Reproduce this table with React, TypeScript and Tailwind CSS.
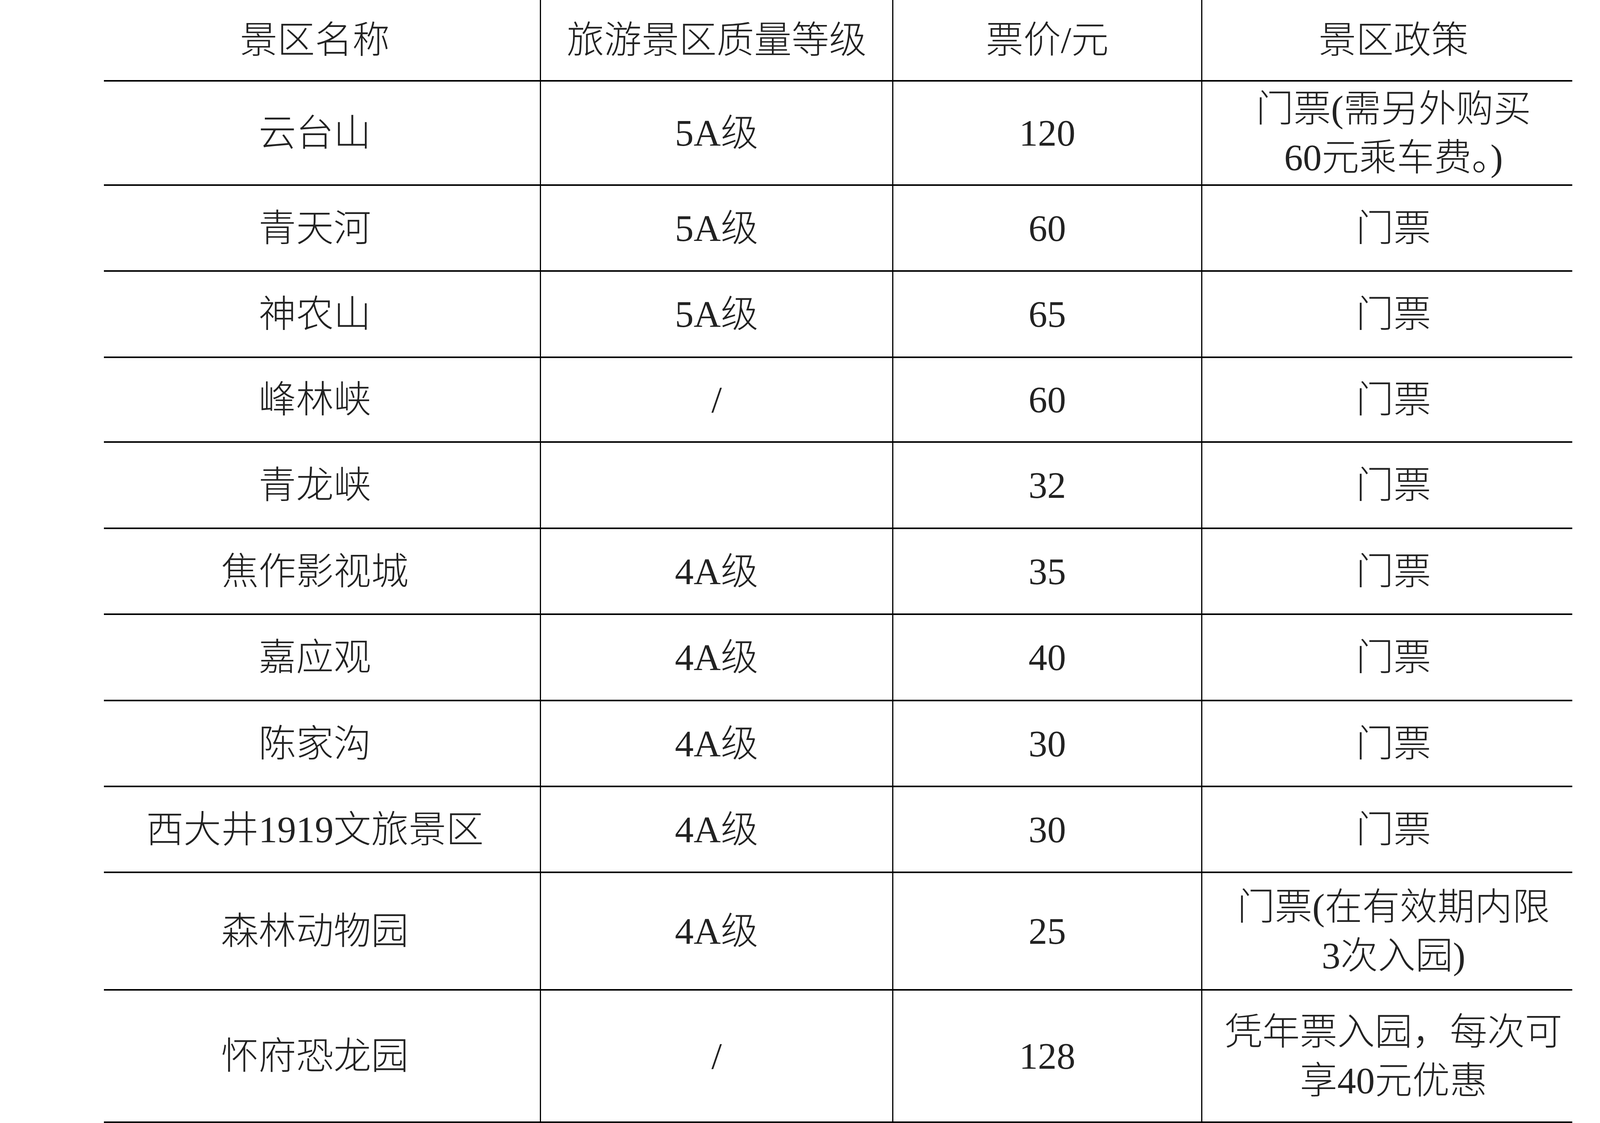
const rows: { name: string; level: string; price: string; policy: string[]; h: string }[] = [
  { name: '云台山', level: '5A级', price: '120', policy: ['门票(需另外购买', '60元乘车费。)'], h: 'h-[267px]' },
  { name: '青天河', level: '5A级', price: '60', policy: ['门票'], h: 'h-[220px]' },
  { name: '神农山', level: '5A级', price: '65', policy: ['门票'], h: 'h-[221px]' },
  { name: '峰林峡', level: '/', price: '60', policy: ['门票'], h: 'h-[217px]' },
  { name: '青龙峡', level: '', price: '32', policy: ['门票'], h: 'h-[221px]' },
  { name: '焦作影视城', level: '4A级', price: '35', policy: ['门票'], h: 'h-[220px]' },
  { name: '嘉应观', level: '4A级', price: '40', policy: ['门票'], h: 'h-[221px]' },
  { name: '陈家沟', level: '4A级', price: '30', policy: ['门票'], h: 'h-[220px]' },
  { name: '西大井1919文旅景区', level: '4A级', price: '30', policy: ['门票'], h: 'h-[220px]' },
  { name: '森林动物园', level: '4A级', price: '25', policy: ['门票(在有效期内限', '3次入园)'], h: 'h-[301px]' },
  { name: '怀府恐龙园', level: '/', price: '128', policy: ['凭年票入园，每次可', '享40元优惠'], h: 'h-[339px]' },
]

function Row({ cells, h }: { cells: React.ReactNode[]; h: string }) {
  return (
    <div className={`grid grid-cols-[1116px_902px_791px_950px] ${h}`}>
      <div className="flex items-center justify-center border-b-4 border-black pr-[36px] text-center">{cells[0]}</div>
      <div className="flex items-center justify-center border-b-4 border-l-[3px] border-black text-center">{cells[1]}</div>
      <div className="flex items-center justify-center border-b-4 border-l-[3px] border-black text-center">{cells[2]}</div>
      <div className="flex items-center justify-center border-b-4 border-l-[3px] border-black pl-[32px] text-center">{cells[3]}</div>
    </div>
  )
}

export default function App() {
  return (
    <div
      className="w-[4320px] h-[2876px] bg-white pl-[266px] text-[96px] leading-[125px] font-light text-[#222] overflow-hidden"
      style={{ fontFamily: '"Liberation Serif", "Noto Sans CJK SC", serif' }}
    >
      <div className="w-[3759px]">
        <Row h="h-[209px]" cells={['景区名称', '旅游景区质量等级', '票价/元', '景区政策']} />
        {rows.map(r => (
          <Row
            key={r.name}
            h={r.h}
            cells={[
              r.name,
              r.level,
              r.price,
              <span>
                {r.policy.map((line, i) => (
                  <span key={i} className="block">{line}</span>
                ))}
              </span>,
            ]}
          />
        ))}
      </div>
    </div>
  )
}
